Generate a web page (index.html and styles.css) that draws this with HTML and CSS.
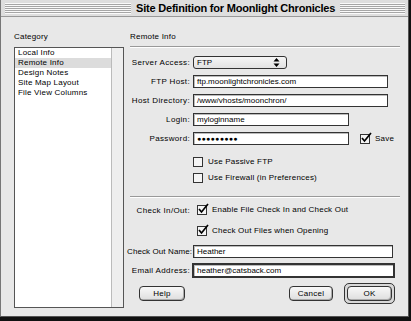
FILE: index.html
```html
<!DOCTYPE html>
<html lang="en">
<head>
  <meta charset="UTF-8">
  <title>Site Definition for Moonlight Chronicles</title>
  <link rel="stylesheet" href="styles.css">
</head>
<body>
  <div class="window">
    <div class="titlebar">
      <div class="stripes left"></div>
      <span class="title">Site Definition for Moonlight Chronicles</span>
      <div class="stripes"></div>
    </div>

    <div class="content">
      <!-- left: category list -->
      <div class="category">
        <div class="pane-label">Category</div>
        <div class="listbox">
          <ul class="list">
            <li>Local Info</li>
            <li class="selected">Remote Info</li>
            <li>Design Notes</li>
            <li>Site Map Layout</li>
            <li>File View Columns</li>
          </ul>
          <div class="scrollbar"></div>
        </div>
      </div>

      <!-- right: settings -->
      <div class="settings">
        <div class="pane-label">Remote Info</div>
        <div class="rule"></div>

        <div class="row first">
          <label class="field-label">Server Access:</label>
          <div class="popup">
            <span>FTP</span>
            <svg class="arrows" width="7" height="9" viewBox="0 0 7 9">
              <path d="M3.5 0 L6.5 3.5 L0.5 3.5 Z M3.5 9 L6.5 5.5 L0.5 5.5 Z" fill="#000"/>
            </svg>
          </div>
        </div>

        <div class="row">
          <label class="field-label">FTP Host:</label>
          <div class="input wide">ftp.moonlightchronicles.com</div>
        </div>

        <div class="row">
          <label class="field-label">Host Directory:</label>
          <div class="input wide">/www/vhosts/moonchron/</div>
        </div>

        <div class="row">
          <label class="field-label">Login:</label>
          <div class="input short">myloginname</div>
        </div>

        <div class="row">
          <label class="field-label">Password:</label>
          <div class="input short dots">●●●●●●●●●</div>
          <div class="check save">
            <span class="box checked"><svg width="12" height="12" viewBox="0 0 12 12"><path d="M2 6 L4.5 9 L11 1" fill="none" stroke="#000" stroke-width="1.7"/></svg></span>
            <span>Save</span>
          </div>
        </div>

        <div class="check-row passive">
          <div class="check">
            <span class="box"></span>
            <span>Use Passive FTP</span>
          </div>
        </div>

        <div class="check-row firewall">
          <div class="check">
            <span class="box"></span>
            <span>Use Firewall (in Preferences)</span>
          </div>
        </div>

        <div class="rule lower"></div>

        <div class="check-row checkin">
          <label class="field-label">Check In/Out:</label>
          <div class="check">
            <span class="box checked"><svg width="12" height="12" viewBox="0 0 12 12"><path d="M2 6 L4.5 9 L11 1" fill="none" stroke="#000" stroke-width="1.7"/></svg></span>
            <span>Enable File Check In and Check Out</span>
          </div>
        </div>

        <div class="check-row checkout">
          <div class="check">
            <span class="box checked"><svg width="12" height="12" viewBox="0 0 12 12"><path d="M2 6 L4.5 9 L11 1" fill="none" stroke="#000" stroke-width="1.7"/></svg></span>
            <span>Check Out Files when Opening</span>
          </div>
        </div>

        <div class="row name-row">
          <label class="field-label">Check Out Name:</label>
          <div class="input name">Heather</div>
        </div>

        <div class="row email-row">
          <label class="field-label">Email Address:</label>
          <div class="input email">heather@catsback.com</div>
        </div>

        <div class="buttons">
          <button class="btn help">Help</button>
          <button class="btn cancel">Cancel</button>
          <div class="default-ring"><button class="btn ok">OK</button></div>
        </div>
      </div>
    </div>
  </div>
</body>
</html>
```

FILE: styles.css
```css
* {
  box-sizing: border-box;
}

body {
  margin: 0;
  background: #111;
  font-family: "Liberation Sans", Arial, sans-serif;
  font-size: 8px;
  color: #000;
}

.window {
  width: 409px;
  height: 317px;
  background: #e8e8e8;
  border-left: 1px solid #777;
  border-right: 1px solid #555;
  border-bottom: 1px solid #555;
}

.titlebar {
  height: 17px;
  display: flex;
  align-items: center;
  background: #dedede;
  border-bottom: 1px solid #999;
  padding: 0 3px 0 4px;
}

.stripes {
  flex: 1;
  height: 11px;
  background: repeating-linear-gradient(to bottom, #fafafa 0, #fafafa 1px, #a6a6a6 1px, #a6a6a6 2px);
}

.stripes.left {
  flex: none;
  width: 126px;
}

.title {
  padding: 0 5px;
  font-weight: bold;
  font-size: 11px;
  letter-spacing: -0.2px;
  line-height: 14px;
  white-space: nowrap;
}

.content {
  display: flex;
  padding: 14px 0 0 13px;
}

.pane-label {
  height: 11px;
  line-height: 11px;
  letter-spacing: 0.2px;
}

.category {
  width: 110px;
}

.listbox {
  margin-top: 5px;
  height: 261px;
  border: 1px solid #555;
  background: #fff;
  display: flex;
}

.list {
  flex: 1;
  list-style: none;
  margin: 0;
  padding: 0;
}

.list li {
  height: 10px;
  line-height: 10px;
  padding-left: 3px;
  letter-spacing: 0.2px;
}

.list li.selected {
  background: #dcdcdc;
}

.scrollbar {
  width: 12px;
  background: #eee;
  border-left: 1px solid #bbb;
}

.settings {
  margin-left: 6px;
  width: 270px;
}

.rule {
  margin-top: 4px;
  height: 2px;
  border-top: 1px solid #999;
  border-bottom: 1px solid #fff;
}

.row {
  display: flex;
  align-items: center;
  margin-top: 6px;
  height: 13px;
}

.row.first {
  margin-top: 8px;
}

.field-label {
  flex: none;
  width: 60px;
  text-align: right;
  margin-right: 3px;
  white-space: nowrap;
  letter-spacing: 0.35px;
}

.name-row .field-label {
  width: 63px;
  margin-left: -3px;
  letter-spacing: 0.1px;
}

.input {
  height: 13px;
  line-height: 11px;
  padding-left: 3px;
  background: #fff;
  border: 1px solid #333;
  box-shadow: inset 1px 1px 0 #bbb;
  white-space: nowrap;
  overflow: hidden;
}

.input.wide {
  width: 195px;
}

.input.short {
  width: 156px;
}

.input.dots {
  font-size: 7px;
  letter-spacing: 0.3px;
}

.input.name {
  width: 200px;
}

.input.email {
  height: 15px;
  width: 203px;
  margin-left: -1px;
  border: 2px solid #333;
  line-height: 11px;
}

.email-row {
  margin-top: 5px;
  height: 15px;
}

.popup {
  width: 94px;
  height: 13px;
  display: flex;
  align-items: center;
  justify-content: space-between;
  padding: 0 3px;
  border: 1px solid #333;
  border-radius: 3px;
  background: linear-gradient(#f6f6f6, #e2e2e2);
  line-height: 11px;
}

.popup .arrows {
  margin-right: 3px;
}

.check {
  display: flex;
  align-items: center;
  height: 10px;
  line-height: 10px;
  letter-spacing: 0.2px;
}

.box {
  position: relative;
  width: 10px;
  height: 10px;
  border: 1px solid #333;
  background: #f4f4f4;
  margin-right: 5px;
  flex: none;
}

.box svg {
  position: absolute;
  left: -1px;
  top: -3px;
}

.check.save {
  margin-left: 11px;
}

.check-row {
  display: flex;
  align-items: center;
  height: 10px;
  padding-left: 63px;
}

.check-row.passive {
  margin-top: 12px;
}

.check-row.firewall {
  margin-top: 6px;
}

.rule.lower {
  margin-top: 13px;
}

.check-row.checkin {
  padding-left: 0;
  margin-top: 7px;
}

.check-row.checkin .field-label {
  margin-right: 7px;
}

.check-row.checkout {
  padding-left: 67px;
  margin-top: 11px;
}

.name-row {
  margin-top: 9px;
}

.buttons {
  display: flex;
  align-items: center;
  margin-top: 5px;
  height: 21px;
  padding-left: 9px;
  padding-right: 5px;
}

.btn {
  height: 15px;
  padding: 0;
  font-family: "Liberation Sans", Arial, sans-serif;
  font-size: 8px;
  letter-spacing: 0.3px;
  line-height: 13px;
  border: 1px solid #333;
  border-radius: 4px;
  background: linear-gradient(#f8f8f8, #dedede);
  box-shadow: inset -1px -1px 0 #aaa;
  color: #000;
}

.btn.help {
  width: 46px;
}

.btn.cancel {
  width: 44px;
  margin-left: auto;
}

.default-ring {
  margin-left: 11px;
  padding: 2px;
  border: 1px solid #333;
  border-radius: 5px;
  background: #d8d8d8;
}

.btn.ok {
  display: block;
  width: 45px;
}
```
